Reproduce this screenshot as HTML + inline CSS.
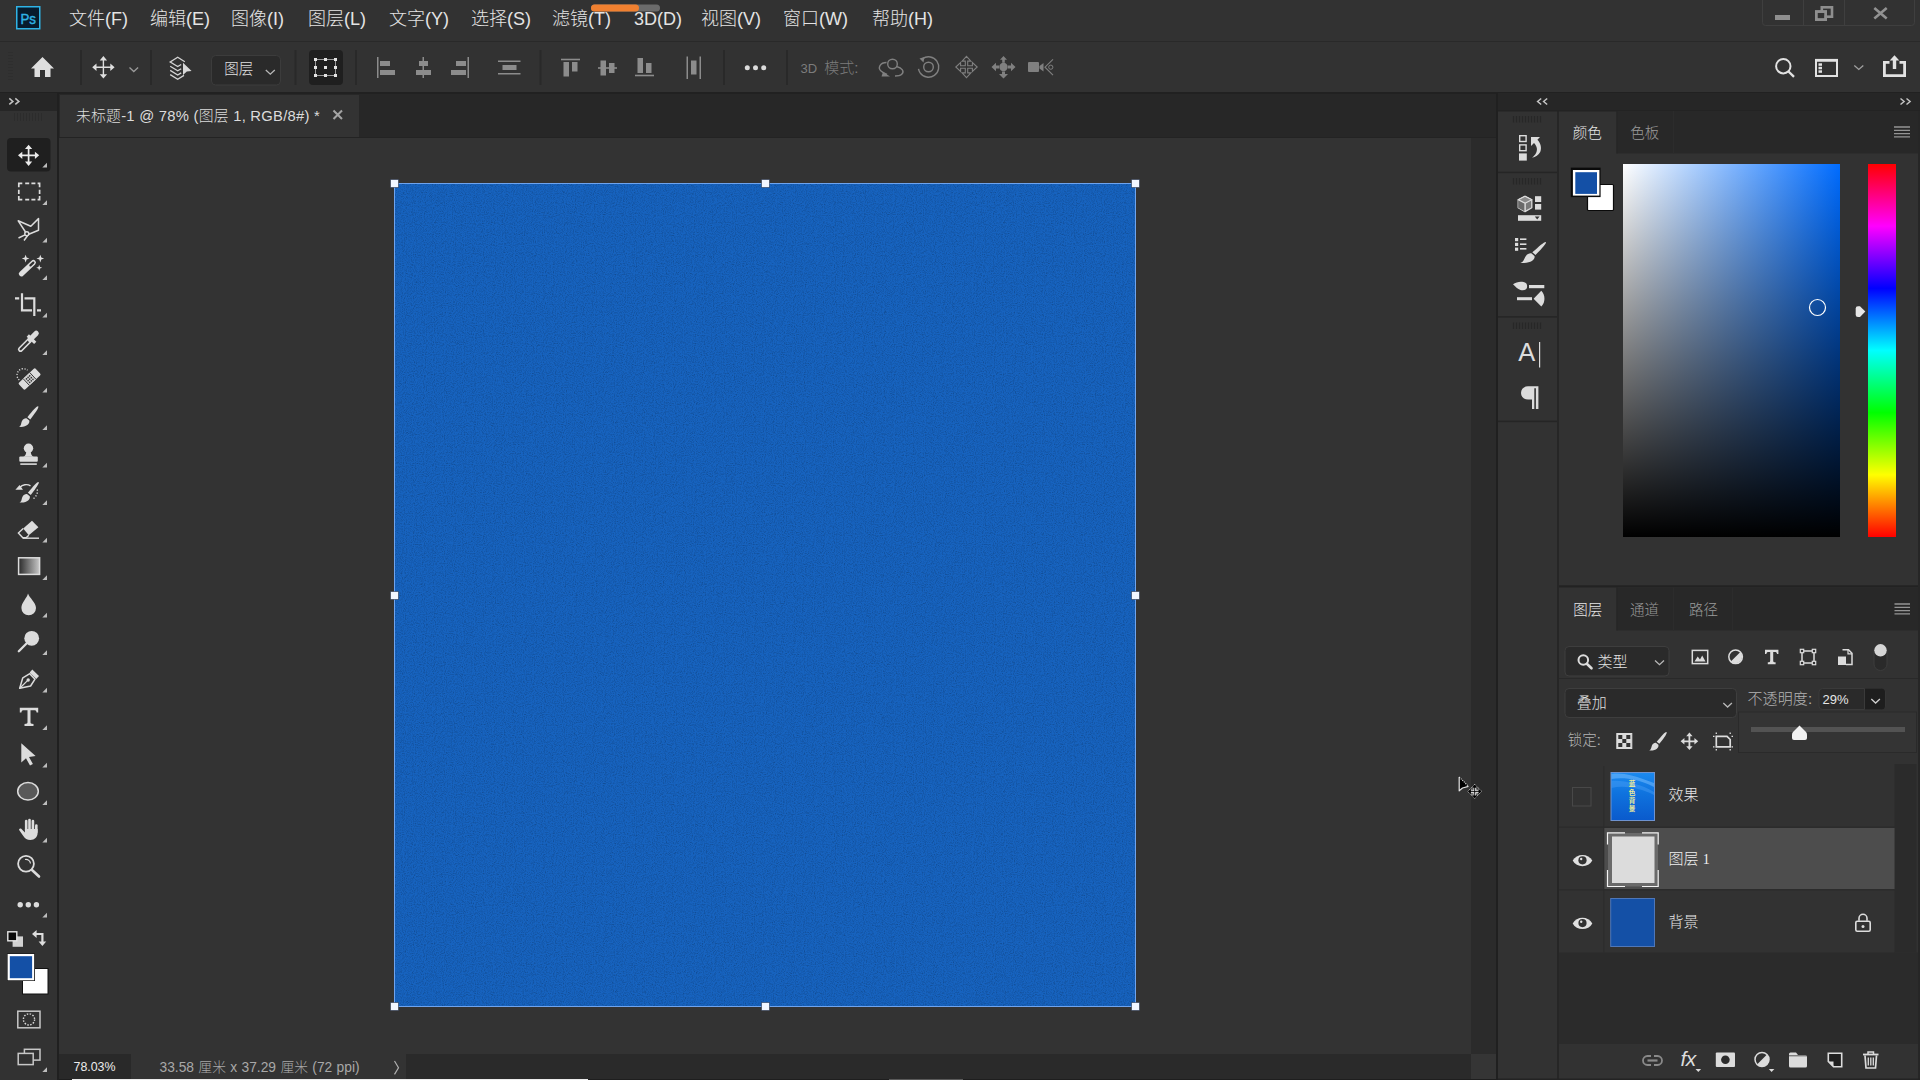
<!DOCTYPE html>
<html lang="zh-CN"><head><meta charset="utf-8"><title>Photoshop</title>
<style>
*{box-sizing:border-box;margin:0;padding:0}
html,body{width:1920px;height:1080px;overflow:hidden;background:#323232}
body{font-family:"Liberation Sans","Noto Sans CJK SC",sans-serif;color:#d6d6d6;position:relative;font-size:13px;font-weight:300}
.abs,.abs *{position:absolute}
div,span,svg{position:absolute}
svg{overflow:visible}
.t{white-space:nowrap;line-height:1}
/* menu */
#menubar{left:0;top:0;width:1920px;height:41px;background:#323232}
#menuline{left:0;top:41px;width:1920px;height:1px;background:#292929}
.mi{top:9px;font-size:18px;color:#e4e4e4;white-space:nowrap;line-height:20px;letter-spacing:0}
/* options */
#optbar{left:0;top:42px;width:1920px;height:50px;background:#323232}
#optline{left:0;top:92px;width:1920px;height:2.5px;background:#212121}
.vsep{width:2px;background:#2a2a2a;top:51px;height:34px}
/* left tools */
#tools{left:0;top:94px;width:57px;height:986px;background:#323232}
#toolsline{left:57px;top:93px;width:3px;height:987px;background:#202020}
#toolshead{left:0;top:93px;width:57px;height:17.5px;background:#262626}
/* doc */
#tabstrip{left:59px;top:94px;width:1438px;height:44px;background:#272727}
#tab{left:60px;top:94.5px;width:299px;height:42.5px;background:#333333}
#paste{left:59px;top:138px;width:1412px;height:916px;background:#333333}
#vscroll{left:1471px;top:138px;width:25px;height:916px;background:#2b2b2b}
#status{left:59px;top:1054px;width:1438px;height:26px;background:#2a2a2a}
#docline{left:1495.5px;top:93px;width:2.5px;height:987px;background:#202020}
/* right strip */
#rhead{left:1498px;top:93px;width:422px;height:17.5px;background:#262626}
#istrip{left:1498px;top:111px;width:59px;height:969px;background:#323232}
#isline{left:1557px;top:111px;width:2px;height:969px;background:#262626}
#rpanel{left:1559px;top:111px;width:361px;height:969px;background:#323232}
</style></head><body>
<div id="menubar"></div><div id="menuline"></div>
<span class="mi" style="left:69px">文件(F)</span>
<span class="mi" style="left:150px">编辑(E)</span>
<span class="mi" style="left:231px">图像(I)</span>
<span class="mi" style="left:308px">图层(L)</span>
<span class="mi" style="left:389px">文字(Y)</span>
<span class="mi" style="left:471px">选择(S)</span>
<span class="mi" style="left:552px">滤镜(T)</span>
<span class="mi" style="left:634px">3D(D)</span>
<span class="mi" style="left:701px">视图(V)</span>
<span class="mi" style="left:783px">窗口(W)</span>
<span class="mi" style="left:872px">帮助(H)</span>
<div id="optbar"></div><div id="optline"></div>
<div id="tools"></div><div id="toolshead"></div><div id="toolsline"></div>
<div id="tabstrip"></div><div id="tab"></div>
<div id="paste"></div><div id="vscroll"></div><div id="status"></div><div id="docline"></div>
<div id="rhead"></div><div id="istrip"></div><div id="isline"></div><div id="rpanel"></div>

<svg id="cv" style="left:0;top:0" width="1920" height="1080" viewBox="0 0 1920 1080">
<defs><filter id="nz" x="0" y="0" width="100%" height="100%"><feTurbulence type="fractalNoise" baseFrequency="0.9" numOctaves="2" seed="3" result="n"/><feColorMatrix type="matrix" values="0 0 0 0 0  0 0 0 0 0  0 0 0 0 0  1.2 1.2 1.2 0 -1.6"/></filter></defs>
<rect x="394" y="183" width="742" height="824" fill="#1763bf"/>
<rect x="394" y="183" width="742" height="824" fill="#000" filter="url(#nz)" opacity="0.2"/>
<rect x="394.5" y="183.5" width="741" height="823" fill="none" stroke="#6fa4ee" stroke-width="1"/>
<g fill="#f2f6ff" stroke="#1d2a44" stroke-opacity="0.55" stroke-width="1">
<rect x="390.5" y="179.5" width="8" height="8"/><rect x="761.5" y="179.5" width="8" height="8"/><rect x="1131.5" y="179.5" width="8" height="8"/>
<rect x="390.5" y="591.5" width="8" height="8"/><rect x="1131.5" y="591.5" width="8" height="8"/>
<rect x="390.5" y="1002.5" width="8" height="8"/><rect x="761.5" y="1002.5" width="8" height="8"/><rect x="1131.5" y="1002.5" width="8" height="8"/>
</g>
<g id="cursor">
<path d="M1459.200 777 L1459.200 790.800 L1462.500 788 L1468.500 786.400 Z" fill="#000"/>
<path d="M1468.500 786.400 L1462.500 788 L1459.200 790.800 L1459.200 777" fill="none" stroke="#e4e4e4" stroke-width="1.200" stroke-linejoin="round"/>
<path d="M1459.200 777 L1468.500 786.400" fill="none" stroke="#e4e4e4" stroke-width="1.100" stroke-dasharray="1.100 1.100"/>
<path transform="translate(1474.700 791.600)" d="M0 -7.300 l3.400 3.600 h-1.800 v1.900 h1.900 v-1.800 l3.600 3.400 l-3.600 3.400 v-1.800 h-1.900 v1.900 h1.800 l-3.400 3.600 l-3.400 -3.600 h1.800 v-1.900 h-1.900 v1.800 l-3.600 -3.400 l3.600 -3.400 v1.800 h1.900 v-1.900 h-1.800 z" fill="#000" stroke="#c8c8c8" stroke-width="0.900" stroke-dasharray="1.200 0.800"/>
<path d="M1474.700 787.800 v7.600 M1470.900 791.600 h7.600" stroke="#e8e8e8" stroke-width="2.600" fill="none"/>
<path d="M1474.700 785.500 v12.200 M1468.600 791.600 h12.200" stroke="#000" stroke-width="0.900" fill="none"/>
</g>
</svg>

<div style="left:59px;top:1054px;width:72px;height:26px;background:#292929"></div>
<div style="left:131px;top:1054px;width:275px;height:26px;background:#333333"></div>
<div style="left:1471px;top:1054px;width:25px;height:24.5px;background:#353535"></div>
<span class="t" style="left:73.500px;top:1060.500px;font-size:12.400px;color:#ececec">78.03%</span>
<span class="t" style="left:159.500px;top:1061px;font-size:13.800px;color:#a8a8a8;word-spacing:0.5px">33.58 厘米 x 37.29 厘米 (72 ppi)</span>
<svg style="left:390px;top:1058px" width="14" height="20" viewBox="390 1058 14 20"><path d="M394.500 1061 l4 6.700 l-4 6.700" fill="none" stroke="#b0b0b0" stroke-width="1.200"/></svg>
<span class="t" style="left:76px;top:108.500px;font-size:14.800px;color:#dcdcdc;letter-spacing:0.25px">未标题-1 @ 78% (图层 1, RGB/8#) *</span>
<svg style="left:330px;top:108px" width="14" height="14" viewBox="330 108 14 14"><path d="M333.500 110.500 l8.500 8.500 M342 110.500 l-8.500 8.500" stroke="#a4a4a4" stroke-width="2.100" fill="none"/></svg>
<div style="left:59px;top:1078.500px;width:1439px;height:1.500px;background:#1e1e1e"></div><div style="left:72px;top:1079px;width:516px;height:1px;background:#ececec"></div><div style="left:889px;top:1079px;width:74px;height:1px;background:#5a5a5a"></div>
<div style="left:59px;top:136.500px;width:1437px;height:1.500px;background:#232323"></div>
<!--CANVAS-->

<svg id="opt" style="left:0;top:0" width="1920" height="94" viewBox="0 0 1920 94">
<!-- ps logo -->
<rect x="16.75" y="6.75" width="23" height="22" fill="#071b2d" stroke="#2fb3e6" stroke-width="1.5"/>
<text x="20.5" y="23.500" font-family="Liberation Sans,sans-serif" font-weight="normal" stroke="#2fb3e6" stroke-width="0.45" font-size="14.500" fill="#2fb3e6" textLength="15.500" lengthAdjust="spacingAndGlyphs">Ps</text>
<!-- progress pill -->
<rect x="591" y="4.500" width="69" height="7" rx="3.500" fill="#6b6b6b"/>
<rect x="591" y="4.500" width="48" height="7" rx="3.500" fill="#f08030"/>
<!-- window buttons -->
<g fill="none" stroke="#3f3f3f" stroke-width="1"><path d="M1762.500 0 V22.500 Q1762.500 25.500 1765.500 25.500 H1911.500 Q1914.500 25.500 1914.500 22.500 V0"/><path d="M1803.500 0V25M1844.500 0V25"/></g>
<rect x="1775" y="15" width="15" height="5" fill="#8e8e8e"/>
<g fill="none" stroke="#8e8e8e" stroke-width="2.600"><rect x="1821.800" y="7.300" width="10.200" height="9.400"/><rect x="1816.300" y="11.600" width="9.400" height="8"/></g>
<rect x="1817.600" y="12.900" width="6.800" height="5.400" fill="#323232"/>
<rect x="1816.300" y="11.600" width="9.400" height="8" fill="none" stroke="#8e8e8e" stroke-width="2.600"/>
<path d="M1874.300 8 L1886.700 18.500 M1886.700 8 L1874.300 18.500" stroke="#929292" stroke-width="2.600" fill="none"/>
<!-- separators -->
<g fill="#292929"><rect x="80" y="50" width="2" height="35"/><rect x="150" y="50" width="2" height="35"/><rect x="294.500" y="50" width="2" height="35"/><rect x="355" y="50" width="2" height="35"/><rect x="539.500" y="50" width="2" height="35"/><rect x="723" y="50" width="2" height="35"/><rect x="786" y="50" width="2" height="35"/></g>
<!-- grip left -->
<g stroke="#2e2e2e" stroke-width="1"><path d="M8 52.500h5M8 55.500h5M8 58.500h5M8 61.500h5M8 64.500h5M8 67.500h5M8 70.500h5M8 73.500h5M8 76.500h5M8 79.500h5"/></g>
<!-- home -->
<path d="M42.500 57 L54 68.500 H50.500 V77 H45 V70 H40 V77 H34.500 V68.500 H31 Z" fill="#dedede"/>
<!-- move -->
<path transform="translate(103.400 67.300)" d="M0 -11.200 l3.700 4.300 h-3 v6.200 h6.200 v-3 l4.300 3.700 l-4.300 3.700 v-3 h-6.200 v6.200 h3 l-3.700 4.300 l-3.700 -4.300 h3 v-6.200 h-6.200 v3 l-4.300 -3.700 l4.300 -3.700 v3 h6.200 v-6.200 h-3 z" fill="#dedede"/>
<path d="M129.500 67.500 l4.300 4 l4.300 -4" fill="none" stroke="#9a9a9a" stroke-width="1.300"/>
<!-- auto select -->
<g fill="none" stroke="#d4d4d4" stroke-width="1.300" stroke-linejoin="miter"><path d="M181.200 64.500 L177.700 66.600 L170.200 62 L177.700 57.300 L184.800 61.700"/><path d="M170.200 66.200 L177.700 70.800 L181.200 68.700"/><path d="M170.200 70.400 L177.700 75 L181.200 72.900"/><path d="M170.200 74.600 L177.700 79.200 L184 75.400"/></g>
<path d="M183 62.800 L191.600 71 L186.800 71.400 L183 75 Z" fill="#d8d8d8"/>
<!-- dropdown -->
<rect x="211.500" y="55.500" width="69" height="29.500" rx="4" fill="#2a2a2a" stroke="#3c3c3c" stroke-width="1"/>
<path d="M265.800 70 l4.500 4.200 l4.500 -4.200" fill="none" stroke="#b8b8b8" stroke-width="1.300"/>
<!-- transform controls -->
<rect x="309" y="50" width="34" height="35" rx="4" fill="#1f1f1f"/>
<g fill="none" stroke="#9a9a9a" stroke-width="1"><rect x="315.500" y="59.500" width="20" height="16"/></g>
<g fill="#e4e4e4"><rect x="314" y="58" width="3" height="3"/><rect x="324" y="58" width="3" height="3"/><rect x="334" y="58" width="3" height="3"/><rect x="314" y="66" width="3" height="3"/><rect x="324" y="66" width="3" height="3"/><rect x="334" y="66" width="3" height="3"/><rect x="314" y="74" width="3" height="3"/><rect x="324" y="74" width="3" height="3"/><rect x="334" y="74" width="3" height="3"/></g>
<!-- align icons (disabled) -->
<g fill="#8c8c8c">
<rect x="377" y="57" width="1.500" height="21"/><rect x="380" y="61" width="10" height="5"/><rect x="380" y="70" width="15" height="5"/>
<rect x="422.500" y="57" width="1.500" height="21"/><rect x="419" y="61" width="9" height="5"/><rect x="416" y="70" width="15" height="5"/>
<rect x="467.500" y="57" width="1.500" height="21"/><rect x="456" y="61" width="10" height="5"/><rect x="451" y="70" width="15" height="5"/>
<rect x="498" y="60.500" width="22.500" height="1.500"/><rect x="502.500" y="65" width="14" height="5"/><rect x="498" y="73" width="22.500" height="1.500"/>
<rect x="561" y="58.700" width="19" height="1.600"/><rect x="563.500" y="62" width="5.500" height="14.500"/><rect x="572" y="62" width="5.500" height="9.500"/>
<rect x="598" y="67.200" width="19" height="1.600"/><rect x="600.500" y="60.500" width="5.500" height="15"/><rect x="609" y="63" width="5.500" height="10"/>
<rect x="635" y="74.700" width="19" height="1.600"/><rect x="637.500" y="58" width="5.500" height="15"/><rect x="646" y="63" width="5.500" height="10"/>
<rect x="686.500" y="56.500" width="1.500" height="22.500"/><rect x="691" y="60.500" width="5.500" height="14"/><rect x="699.500" y="56.500" width="1.500" height="22.500"/>
</g>
<!-- dots -->
<g fill="#dcdcdc"><circle cx="747.300" cy="67.800" r="2.500"/><circle cx="755.500" cy="67.800" r="2.500"/><circle cx="763.700" cy="67.800" r="2.500"/></g>
<!-- 3d icons -->
<g fill="none" stroke="#808080" stroke-width="1.400">
<circle cx="892.500" cy="64" r="4.800"/><path d="M886.500 62.500 C880 62.500 877.500 68 881 71 C883 72.800 885 73.500 887 74.500"/><path d="M896.500 66.500 C902 68 905 71.500 901.500 74.500 C900 75.800 897 76 895 76"/>
<circle cx="928.500" cy="67" r="10.200" stroke-dasharray="52 12.100" transform="rotate(-125 928.500 67)"/><circle cx="928.500" cy="67" r="4.800"/>
<path d="M966.500 56.300 l4.400 4.800 h-3.200 v4.700 h4.700 v-3.200 l4.800 4.400 l-4.800 4.400 v-3.200 h-4.700 v4.700 h3.200 l-4.400 4.800 l-4.400 -4.800 h3.200 v-4.700 h-4.700 v3.200 l-4.800 -4.400 l4.800 -4.400 v3.200 h4.700 v-4.700 h-3.200 z" stroke-width="1.100"/>
<path d="M1053 59.300 l-8 7.900 l8 7.900" stroke-width="1.100"/><circle cx="1050.800" cy="67.200" r="2.100" stroke-width="1"/>
</g>
<g fill="#808080"><path d="M883 72 l7 4.500 h-8.500 z"/><path d="M919.500 58.500 l5 -1.500 l-1 5.500 z"/>
<circle cx="1003.500" cy="67" r="4.200"/><path d="M1003.500 56 l3.500 3.800 h-2.200 v3 h-2.600 v-3 h-2.200 z"/><path d="M1003.500 78.500 l-4.500 -4.500 h3 v-2.500 h3 v2.500 h3 z"/><path d="M991.500 67 l4.500 -4.200 v2.700 h3 v3 h-3 v2.700 z"/><path d="M1015.500 67 l-4.500 -4.200 v2.700 h-3 v3 h3 v2.700 z"/>
<rect x="1028" y="62" width="11" height="10" rx="1"/><path d="M1039.500 66 l4 -3 v8.500 l-4 -3 z"/></g>
<!-- right icons -->
<g fill="none" stroke="#e2e2e2"><circle cx="1783.300" cy="66.200" r="7.200" stroke-width="2"/><path d="M1788.500 71.500 L1794 76.800" stroke-width="2.400"/>
<rect x="1816" y="60.500" width="21" height="15.500" stroke-width="2"/><path d="M1815 60.200h23" stroke-width="2.600"/>
<path d="M1854.300 65.500 l4.500 4 l4.500 -4" stroke="#a0a0a0" stroke-width="1.300"/>
<path d="M1889.500 62.400 H1884.400 V75.600 H1904.600 V62.400 H1899.500" stroke-width="2.800"/></g>
<g fill="#e2e2e2"><rect x="1818.500" y="63.300" width="3.500" height="2.500"/><rect x="1818.500" y="66.800" width="3.500" height="2.500"/><rect x="1818.500" y="70.300" width="3.500" height="2.500"/>
<path d="M1894.500 55.200 l4.800 5.300 h-3.100 v8.500 h-3.400 v-8.500 h-3.100 z"/></g>
</svg>
<span class="t" style="left:224.300px;top:61.800px;font-size:14.500px;color:#e0e0e0">图层</span>
<span class="t" style="left:800.500px;top:60px;font-size:15px;color:#7c7c7c;word-spacing:3px"><span style="position:static;font-size:13px">3D</span> 模式:</span>
<!--OPTICONS-->

<svg id="tl" style="left:0;top:0" width="60" height="1080" viewBox="0 0 60 1080">
<path d="M9.300 98.400 l3.600 3 l-3.600 3 M15.300 98.400 l3.600 3 l-3.600 3" fill="none" stroke="#c4c4c4" stroke-width="1.500"/>
<g stroke="#2c2c2c" stroke-width="1"><path d="M14.500 113v8M17.500 113v8M20.500 113v8M23.500 113v8M26.500 113v8M29.500 113v8M32.500 113v8M35.500 113v8M38.500 113v8M41.500 113v8"/></g>
<rect x="7" y="138" width="43.500" height="33.500" rx="4" fill="#1f1f1f"/>
<g fill="#bdbdbd"><path d="M47 162.8 V167.5 H42.3 Z"/><path d="M47 200.3 V205.0 H42.3 Z"/><path d="M47 237.8 V242.5 H42.3 Z"/><path d="M47 275.3 V280.0 H42.3 Z"/><path d="M47 312.8 V317.5 H42.3 Z"/><path d="M47 350.3 V355.0 H42.3 Z"/><path d="M47 387.8 V392.5 H42.3 Z"/><path d="M47 425.3 V430.0 H42.3 Z"/><path d="M47 462.8 V467.5 H42.3 Z"/><path d="M47 500.3 V505.0 H42.3 Z"/><path d="M47 537.8 V542.5 H42.3 Z"/><path d="M47 575.3 V580.0 H42.3 Z"/><path d="M47 612.8 V617.5 H42.3 Z"/><path d="M47 650.3 V655.0 H42.3 Z"/><path d="M47 687.8 V692.5 H42.3 Z"/><path d="M47 725.3 V730.0 H42.3 Z"/><path d="M47 762.8 V767.5 H42.3 Z"/><path d="M47 800.3 V805.0 H42.3 Z"/><path d="M47 837.8 V842.5 H42.3 Z"/><path d="M47 912.8 V917.5 H42.3 Z"/><path d="M47 1067.3 V1072.0 H42.3 Z"/></g>
<!-- move -->
<path transform="translate(28.600 155.300)" d="M0 -10.600 l3.600 4.300 h-2.750 v5.450 h5.450 v-2.750 l4.300 3.600 l-4.300 3.600 v-2.750 h-5.450 v5.450 h2.750 l-3.600 4.300 l-3.600 -4.300 h2.750 v-5.450 h-5.450 v2.750 l-4.300 -3.600 l4.300 -3.600 v2.750 h5.450 v-5.450 h-2.750 z" fill="#ececec"/>
<!-- marquee -->
<path d="M18.800 187.300 V183.300 H22.300 M25.200 183.300 h4 M31.400 183.300 h4 M37.600 183.300 H39.600 V187.300 M39.600 189.800 v4.200 M39.600 196 V199.600 H37.600 M35.400 199.600 h-4 M29.200 199.600 h-4 M22.300 199.600 H18.800 V196 M18.800 194 v-4.200" fill="none" stroke="#dcdcdc" stroke-width="1.700"/>
<!-- lasso -->
<g fill="none" stroke="#dcdcdc" stroke-width="1.500" stroke-linejoin="round"><path d="M25.500 232 L18.200 220.800 L30.800 226.300 L38.500 218.600 L38.500 230.300 L28.800 234.300"/><circle cx="26.800" cy="233.800" r="2"/><path d="M25 234.800 L18.500 238 M27.500 235.800 L24 240.500"/></g>
<!-- wand -->
<g><path d="M21.400 273.800 L33.300 262.600" stroke="#e0e0e0" stroke-width="5.200" stroke-linecap="round" fill="none"/><path d="M30.400 265.400 L33.300 262.600" stroke="#323232" stroke-width="2.200" stroke-linecap="round"/>
<g fill="#e0e0e0"><path d="M25.600 254.800 l1 2.800 l2.800 1 l-2.800 1 l-1 2.800 l-1 -2.800 l-2.800 -1 l2.800 -1 z"/><path d="M40.300 254.800 l1 2.800 l2.800 1 l-2.800 1 l-1 2.800 l-1 -2.800 l-2.800 -1 l2.800 -1 z"/><path d="M39.200 264.700 l0.800 2.200 l2.200 0.800 l-2.200 0.800 l-0.800 2.200 l-0.800 -2.200 l-2.200 -0.800 l2.200 -0.800 z"/></g></g>
<!-- crop -->
<path d="M22 293.300 V310.300 H32 M24.500 298.300 H34.300 V316 M15 298.300 h4.200 M37 310.300 h4" fill="none" stroke="#dcdcdc" stroke-width="2.200"/>
<!-- eyedropper -->
<g><path d="M20.500 349.300 L29.500 340.300" stroke="#dcdcdc" stroke-width="5.200" stroke-linecap="round"/><path d="M20.600 349.200 L29 340.800" stroke="#323232" stroke-width="2.200" stroke-linecap="round"/>
<path d="M27.800 335.500 L35.200 342.900" stroke="#dcdcdc" stroke-width="3.200"/><path d="M30 339.500 L36.200 333.300" stroke="#dcdcdc" stroke-width="5.200" stroke-linecap="round"/></g>
<!-- heal -->
<g transform="translate(29.600 379) rotate(-43)"><rect x="-11.500" y="-4.600" width="23" height="9.200" rx="1.500" fill="#dcdcdc"/><rect x="-4.300" y="-4.600" width="8.600" height="9.200" fill="#d0d0d0"/><path d="M-4.500 -4.600v9.200M4.500 -4.600v9.200" stroke="#323232" stroke-width="0.900"/><g fill="#323232"><circle cx="-2.200" cy="-2.200" r="0.800"/><circle cx="0" cy="-2.200" r="0.800"/><circle cx="2.200" cy="-2.200" r="0.800"/><circle cx="-2.200" cy="0.200" r="0.800"/><circle cx="0" cy="0.200" r="0.800"/><circle cx="2.200" cy="0.200" r="0.800"/><circle cx="-2.200" cy="2.500" r="0.800"/><circle cx="0" cy="2.500" r="0.800"/><circle cx="2.200" cy="2.500" r="0.800"/></g></g>
<path d="M19.300 380 A5.500 5.500 0 0 1 27.500 370.200" fill="none" stroke="#dcdcdc" stroke-width="1.300" stroke-dasharray="1.200 1.500"/>
<!-- brush -->
<g fill="#dcdcdc"><path d="M38.200 406.300 C39.200 407.300 36 412 30.300 419.400 L27.400 417.200 C33 410 37.200 405.500 38.200 406.300 Z"/><path d="M26.500 418.300 L29.300 420.600 C30 424 26.500 427.500 19 426.800 C21.500 425.500 21 423 22 421 C23 419 25 418 26.500 418.300 Z"/></g>
<!-- stamp -->
<g fill="#dcdcdc"><circle cx="28.500" cy="448.200" r="4.700"/><path d="M26.300 451 h4.400 c0 3 1 5 3 5.800 h-10.400 c2 -0.800 3 -2.800 3 -5.800 z"/><rect x="19.300" y="456.500" width="18.500" height="5.300" rx="1"/><rect x="20.300" y="463.300" width="16.500" height="1.600"/></g>
<!-- history brush -->
<g fill="#dcdcdc"><path d="M38.600 482 C39.600 483 36.500 487.500 30.800 495 L27.900 492.800 C33.500 485.600 37.600 481.200 38.600 482 Z"/><path d="M27 494 L29.800 496.300 C30.500 499.700 27 503.200 19.500 502.500 C22 501.200 21.500 498.700 22.500 496.700 C23.500 494.700 25.500 493.700 27 494 Z"/><path d="M15.400 489.800 L19.600 485 L23 489.800 Z"/></g>
<path d="M19.800 487.500 C22.500 484.500 27 483.800 30.500 485.800" fill="none" stroke="#dcdcdc" stroke-width="1.400"/>
<path d="M37.200 489.500 C38 493.500 36 497.500 32 499.300" fill="none" stroke="#dcdcdc" stroke-width="1.400" stroke-dasharray="1.300 1.700"/>
<!-- eraser -->
<g><path d="M32 520.800 L38.400 527.200 L28.800 535.200 L23.200 528.600 Z" fill="#dcdcdc"/><path d="M23.200 528.600 L18.400 533 L22.800 537.800 L26.200 537.800 L28.800 535.200" fill="none" stroke="#dcdcdc" stroke-width="1.400"/><path d="M22.800 538.200 H39" stroke="#dcdcdc" stroke-width="1.400"/></g>
<!-- gradient -->
<defs><linearGradient id="gg" x1="0" x2="1" y1="0" y2="0"><stop offset="0" stop-color="#2a2a2a"/><stop offset="1" stop-color="#c8c8c8"/></linearGradient></defs>
<rect x="18.600" y="557.800" width="21" height="16.600" fill="url(#gg)" stroke="#dcdcdc" stroke-width="1.500"/>
<!-- blur -->
<path d="M28 593.500 C29.500 598 36 602.500 36 608 A7.300 7.300 0 0 1 21.400 608 C21.400 602.500 27 598 28 593.500 Z" fill="#dcdcdc"/>
<!-- dodge -->
<circle cx="31.700" cy="638.300" r="7.400" fill="#dcdcdc"/><path d="M26.500 643.500 L18.800 651.300" stroke="#dcdcdc" stroke-width="2.300" stroke-linecap="round"/>
<!-- pen -->
<g><path d="M19.700 688.300 L22.800 677.800 L29.800 673.700 L35 679.200 L30.600 686 Z" fill="none" stroke="#dcdcdc" stroke-width="1.500" stroke-linejoin="round"/><path d="M20 688 L27.500 680.600" stroke="#dcdcdc" stroke-width="1.300"/><circle cx="28.200" cy="680" r="1.700" fill="#dcdcdc"/><path d="M32.300 669.600 L39 676 L36.300 679 L29.600 672.400 Z" fill="#dcdcdc"/></g>
<!-- type -->
<path d="M19.800 707.800 H38.200 V712.600 H36.600 C36.400 710.800 35.800 710.300 34 710.300 H30.500 V722 C30.500 723.500 31 723.900 33.500 724 V726 H24.500 V724 C27 723.900 27.500 723.500 27.500 722 V710.300 H24 C22.200 710.300 21.600 710.800 21.400 712.600 H19.800 Z" fill="#dcdcdc"/>
<!-- path select -->
<path d="M21.300 743.300 L21.300 762.400 L26 758.300 L30 765.600 L32.900 764 L29 757 L35.600 756 Z" fill="#dcdcdc"/>
<!-- ellipse -->
<ellipse cx="28" cy="791.300" rx="10.300" ry="8.700" fill="#595959" stroke="#dcdcdc" stroke-width="1.500"/>
<!-- hand -->
<g stroke="#dcdcdc" stroke-width="2.600" stroke-linecap="round" fill="none"><path d="M26.200 821 V830"/><path d="M29.500 820 V830"/><path d="M32.900 821 V830"/><path d="M36.300 825.500 V832"/></g>
<path d="M24.900 829 H37.600 V833 C37.600 837 34.500 840 30.500 840 C27 840 25 838.500 23.300 836 L19.300 830.300 C18.500 829 20 827.800 21.300 828.800 L24.900 832.500 Z" fill="#dcdcdc"/>
<!-- zoom -->
<circle cx="26" cy="863.800" r="7.900" fill="none" stroke="#dcdcdc" stroke-width="1.800"/><path d="M32 870 L39 876.500" stroke="#dcdcdc" stroke-width="2.600" stroke-linecap="round"/><path d="M25 859.500 C28 859 30.300 861 30.500 863.500" fill="none" stroke="#dcdcdc" stroke-width="1.200"/>
<!-- dots -->
<g fill="#dcdcdc"><circle cx="20.200" cy="904.800" r="2.700"/><circle cx="28.300" cy="904.800" r="2.700"/><circle cx="36.400" cy="904.800" r="2.700"/></g>
<!-- default colors -->
<rect x="12.600" y="936.400" width="10.400" height="10.400" fill="#d2d2d2"/><rect x="7.800" y="931.800" width="9" height="9" fill="#0a0a0a" stroke="#e6e6e6" stroke-width="1.400"/>
<!-- swap -->
<g fill="#dcdcdc"><path d="M32 934 l4.600 -4 v2.900 h6.900 v8.700 h2.700 l-3.800 4.400 l-3.800 -4.400 h2.700 v-6.500 h-4.700 v2.900 z"/></g>
<!-- fg/bg -->
<rect x="22.500" y="968.500" width="25.500" height="25.500" fill="#fff" stroke="#111" stroke-width="1"/>
<rect x="7" y="953.500" width="28" height="27.500" fill="#111"/><rect x="7.600" y="954" width="26.600" height="26.300" fill="#fff"/><rect x="9.800" y="956.200" width="22.300" height="22" fill="#1450a6"/>
<!-- quick mask -->
<rect x="17.800" y="1011.200" width="22.200" height="16.600" fill="none" stroke="#c8c8c8" stroke-width="1.500"/><circle cx="29" cy="1019.400" r="5.600" fill="none" stroke="#d8d8d8" stroke-width="1.400" stroke-dasharray="1.500 1.430"/>
<!-- screen mode -->
<rect x="24.400" y="1049.300" width="15.600" height="10.800" fill="none" stroke="#c8c8c8" stroke-width="1.500"/><rect x="18.200" y="1053.400" width="15" height="11.200" fill="#323232" stroke="#c8c8c8" stroke-width="1.500"/>
</svg>
<!--TOOLICONS-->

<svg id="rs" style="left:0;top:0" width="1920" height="600" viewBox="0 0 1920 600">
<defs>
<linearGradient id="hx" x1="0" x2="1" y1="0" y2="0"><stop offset="0" stop-color="#fff"/><stop offset="1" stop-color="#006cff"/></linearGradient>
<linearGradient id="vy" x1="0" x2="0" y1="0" y2="1"><stop offset="0" stop-color="#000" stop-opacity="0"/><stop offset="1" stop-color="#000"/></linearGradient>
<linearGradient id="hue" x1="0" x2="0" y1="0" y2="1"><stop offset="0" stop-color="#f00"/><stop offset="0.1667" stop-color="#f0f"/><stop offset="0.3333" stop-color="#00f"/><stop offset="0.5" stop-color="#0ff"/><stop offset="0.6667" stop-color="#0f0"/><stop offset="0.8333" stop-color="#ff0"/><stop offset="1" stop-color="#f00"/></linearGradient>
</defs>
<!-- header chevrons -->
<path d="M1541.200 98.500 l-3.600 3 l3.600 3 M1547.200 98.500 l-3.600 3 l3.600 3" fill="none" stroke="#c4c4c4" stroke-width="1.500"/>
<path d="M1900.500 98.500 l3.600 3 l-3.600 3 M1906.500 98.500 l3.600 3 l-3.600 3" fill="none" stroke="#c4c4c4" stroke-width="1.500"/>
<rect x="1498" y="110" width="422" height="1.500" fill="#232323"/>
<!-- icon strip groups -->
<path d="M1513.5 116v6.5M1516.5 116v6.5M1519.5 116v6.5M1522.5 116v6.5M1525.5 116v6.5M1528.5 116v6.5M1531.5 116v6.5M1534.5 116v6.5M1537.5 116v6.5M1540.5 116v6.5" stroke="#272727" stroke-width="1.2"/><path d="M1513.5 178v6.5M1516.5 178v6.5M1519.5 178v6.5M1522.5 178v6.5M1525.5 178v6.5M1528.5 178v6.5M1531.5 178v6.5M1534.5 178v6.5M1537.5 178v6.5M1540.5 178v6.5" stroke="#272727" stroke-width="1.2"/><path d="M1513.5 322.5v6.5M1516.5 322.5v6.5M1519.5 322.5v6.5M1522.5 322.5v6.5M1525.5 322.5v6.5M1528.5 322.5v6.5M1531.5 322.5v6.5M1534.5 322.5v6.5M1537.5 322.5v6.5M1540.5 322.5v6.5" stroke="#272727" stroke-width="1.2"/>
<rect x="1498" y="171.700" width="59" height="1.500" fill="#252525"/><rect x="1498" y="316.200" width="59" height="1.500" fill="#252525"/><rect x="1498" y="420.600" width="59" height="1.500" fill="#252525"/>
<!-- history -->
<g fill="none" stroke="#dcdcdc" stroke-width="1.400"><rect x="1519.700" y="135.700" width="6.400" height="5.800"/><rect x="1519.700" y="144.900" width="6.400" height="5.800"/></g>
<rect x="1519" y="153.400" width="7.800" height="7.200" fill="#dcdcdc"/>
<path d="M1531 137 H1540 L1537.400 139.800 C1540.600 143 1542 148 1540.200 152 C1538.700 155 1535.500 157 1532 157.800 C1535.500 155 1537.500 151.500 1536.800 148 C1536.300 146 1535.300 144.300 1534 143 L1531 146 Z" fill="#dcdcdc"/>
<!-- 3d -->
<g><path d="M1525 196.300 L1531.800 199.800 V207.700 L1525 211.600 L1518.200 207.700 V199.800 Z" fill="#7a7a7a" stroke="#dcdcdc" stroke-width="1.300" stroke-linejoin="round"/><path d="M1525 196.300 L1531.800 199.800 L1525 203.300 L1518.200 199.800 Z" fill="#8a8a8a" stroke="#dcdcdc" stroke-width="1.200" stroke-linejoin="round"/><path d="M1525 203.300 V211.600" stroke="#dcdcdc" stroke-width="1.200"/><path d="M1518.200 199.800 L1525 203.300 V211.600 L1518.200 207.700Z" fill="#6a6a6a"/><path d="M1518.200 199.800 L1525 203.300 V211.600" fill="none" stroke="#dcdcdc" stroke-width="1.200"/>
<g fill="#dcdcdc"><rect x="1535" y="196.200" width="6.200" height="5.800"/><rect x="1535" y="204" width="6.200" height="5.600"/><rect x="1518" y="215.200" width="23.200" height="5.600"/></g><path d="M1534.800 216.600 h4.800 l-2.400 3 z" fill="#323232"/></g>
<!-- brush settings -->
<g fill="#dcdcdc"><rect x="1515" y="238" width="3.200" height="3.200"/><rect x="1515" y="242.800" width="3.200" height="3.200"/><rect x="1515" y="247.600" width="3.200" height="3.200"/><rect x="1520" y="238.400" width="6.400" height="1.600"/><rect x="1520" y="243.400" width="6.400" height="1.600"/><rect x="1520" y="248" width="6.400" height="1.600"/>
<path d="M1545.800 242 C1546.800 243 1543 247.500 1535.500 255 L1532.300 252.300 C1540 245.500 1544.800 241.200 1545.800 242 Z"/><path d="M1531.300 253.300 L1534.500 256 C1535.500 259.500 1530.500 263.500 1520.400 263 C1523.500 261.800 1524 259.500 1525.200 257 C1526.500 254.500 1529 253 1531.300 253.300 Z"/></g>
<!-- brushes -->
<g fill="#dcdcdc"><path d="M1513 284.300 C1516 282 1520 281.300 1523.500 282 C1526.500 282.600 1527.500 285 1527 287.500 C1526.500 290 1523.500 290.800 1520.500 290 C1517.500 289.200 1515.500 286.800 1513 284.300 Z"/><rect x="1529" y="285" width="15.300" height="3.200"/><rect x="1517" y="297.200" width="15" height="3"/><path d="M1533.600 298.700 L1541.300 290.800 C1545.500 295 1545.500 302.500 1541.300 306.600 Z"/></g>
<!-- A| -->
<path d="M1539.600 342v25.500" stroke="#dcdcdc" stroke-width="1.200"/>
<!-- pilcrow -->
<path d="M1538.400 386.200 V409 H1535.900 V388.300 H1534.300 V409 H1532 V399.600 H1528 C1524 399.600 1521 396.800 1521 393 C1521 389 1524 386.200 1528 386.200 Z" fill="#dcdcdc"/>
<!-- color tabs -->
<rect x="1616.500" y="111" width="303.500" height="42.500" fill="#282828"/>
<rect x="1616.500" y="111" width="1" height="42.500" fill="#252525"/><rect x="1673" y="111" width="1" height="42.500" fill="#2c2c2c"/>
<path d="M1894 127h16M1894 130.300h16M1894 133.600h16M1894 136.900h16" stroke="#949494" stroke-width="1.300"/>
<!-- swatches -->
<rect x="1587.500" y="184.500" width="26" height="26" rx="1" fill="#fff" stroke="#0a0a0a" stroke-width="1.200"/>
<rect x="1570.800" y="167.600" width="29.800" height="29.500" fill="#0a0a0a"/><rect x="1572.900" y="170" width="26.500" height="25.600" fill="#fff"/><rect x="1575.300" y="172.200" width="21.700" height="21.700" fill="#1450a6"/>
<!-- color field -->
<rect x="1623" y="164" width="217" height="373" fill="url(#hx)"/><rect x="1623" y="164" width="217" height="373" fill="url(#vy)"/>
<circle cx="1817.500" cy="307.500" r="8" fill="none" stroke="#fff" stroke-width="1.200"/>
<rect x="1868" y="164" width="28" height="373" fill="url(#hue)"/>
<path d="M1855.700 308.500 Q1855.700 306.300 1858 306.300 H1860 L1865.300 311.600 L1860 317 H1858 Q1855.700 317 1855.700 314.800 Z" fill="#e6e6e6"/>
<!-- panel separator -->
<rect x="1559" y="585.300" width="361" height="2.200" fill="#222222"/>
<rect x="1918" y="111" width="2" height="489" fill="#262626"/>
</svg>
<span class="t" style="left:1518.300px;top:340px;font-size:25.500px;color:#dcdcdc;font-family:'Liberation Sans',sans-serif">A</span>
<span class="t" style="left:1572.800px;top:126px;font-size:14.500px;color:#e6e6e6">颜色</span>
<span class="t" style="left:1630.300px;top:126px;font-size:14.500px;color:#9a9a9a">色板</span>
<!--RIGHT-->

<svg id="ly" style="left:0;top:580px" width="1920" height="500" viewBox="0 580 1920 500">
<defs><linearGradient id="th1" x1="0" x2="0" y1="0" y2="1"><stop offset="0" stop-color="#1b8af0"/><stop offset="0.45" stop-color="#0f72de"/><stop offset="1" stop-color="#0a5acc"/></linearGradient></defs>
<!-- tabs -->
<rect x="1616.500" y="587.500" width="301.500" height="43" fill="#282828"/>
<rect x="1616.500" y="587.500" width="1" height="43" fill="#252525"/><rect x="1673" y="587.500" width="1" height="43" fill="#2c2c2c"/><rect x="1732" y="587.500" width="1" height="43" fill="#2c2c2c"/>
<path d="M1894.500 604h15.500M1894.500 607.300h15.500M1894.500 610.600h15.500M1894.500 613.900h15.500" stroke="#949494" stroke-width="1.300"/>
<!-- filter row -->
<rect x="1565" y="646.500" width="104" height="29.500" rx="4" fill="#2a2a2a" stroke="#3e3e3e"/>
<circle cx="1583.300" cy="660" r="4.800" fill="none" stroke="#dcdcdc" stroke-width="2"/><path d="M1586.800 663.800 L1591.500 668.300" stroke="#dcdcdc" stroke-width="2.600" stroke-linecap="round"/>
<path d="M1655 660.500 l4.500 4.200 l4.500 -4.200" fill="none" stroke="#b8b8b8" stroke-width="1.300"/>
<rect x="1692.300" y="650.400" width="15.400" height="13.200" fill="none" stroke="#dcdcdc" stroke-width="1.500"/><path d="M1694.500 661.500 l3.200 -5 l2.300 3 l2.200 -4 l3.300 6 z" fill="#dcdcdc"/>
<circle cx="1735.600" cy="656.800" r="6.800" fill="none" stroke="#dcdcdc" stroke-width="1.500"/><path d="M1730.800 661.600 A6.800 6.800 0 0 0 1740.400 652 Z" fill="#dcdcdc"/>
<path d="M1765 649.800 H1778.400 V654 H1777 C1776.800 652.300 1776.300 651.900 1774.800 651.900 H1773.200 V660.500 C1773.200 661.900 1773.600 662.200 1775.600 662.300 V664.200 H1767.800 V662.300 C1769.800 662.200 1770.200 661.900 1770.200 660.500 V651.900 H1768.600 C1767.100 651.900 1766.600 652.300 1766.400 654 H1765 Z" fill="#dcdcdc"/>
<rect x="1802" y="651" width="12" height="12" fill="none" stroke="#dcdcdc" stroke-width="1.500"/><g fill="#323232" stroke="#dcdcdc" stroke-width="1.200"><rect x="1800.300" y="649.300" width="3.400" height="3.400"/><rect x="1812.300" y="649.300" width="3.400" height="3.400"/><rect x="1800.300" y="661.300" width="3.400" height="3.400"/><rect x="1812.300" y="661.300" width="3.400" height="3.400"/></g>
<path d="M1842.500 649.800 H1848.500 L1852 653.300 V664.500 H1846" fill="none" stroke="#dcdcdc" stroke-width="1.500"/><path d="M1848 649.800 V653.800 H1852" fill="none" stroke="#dcdcdc" stroke-width="1.200"/><rect x="1838" y="656.500" width="8" height="8.500" fill="#dcdcdc"/>
<rect x="1874" y="644.500" width="13" height="26" rx="6.500" fill="#2a2a2a" stroke="#3c3c3c"/><circle cx="1880.500" cy="650.300" r="6.200" fill="#d6d6d6"/>
<rect x="1559" y="678" width="359" height="1" fill="#292929"/>
<!-- blend row -->
<rect x="1565" y="688.500" width="171.500" height="29" rx="4" fill="#2a2a2a" stroke="#3e3e3e"/>
<path d="M1723.300 703 l4.300 4 l4.300 -4" fill="none" stroke="#b8b8b8" stroke-width="1.300"/>
<rect x="1819" y="688.500" width="66" height="21" rx="3.500" fill="#2a2a2a" stroke="#3a3a3a"/><path d="M1864.500 688.500 H1881.500 Q1885 688.500 1885 692 V706 Q1885 709.500 1881.500 709.500 H1864.500 Z" fill="#1e1e1e"/><rect x="1864" y="688.500" width="1" height="21" fill="#3a3a3a"/>
<path d="M1871.300 699 l4.300 4 l4.300 -4" fill="none" stroke="#d0d0d0" stroke-width="1.300"/>
<!-- slider popup -->
<rect x="1738.500" y="712" width="178" height="40.500" fill="#343434" stroke="#2a2a2a"/>
<rect x="1751" y="727" width="154" height="5" fill="#535353"/>
<path d="M1799.500 725.500 L1806 732 Q1807 733 1807 734.500 V738 Q1807 740 1805 740 H1794 Q1792 740 1792 738 V734.500 Q1792 733 1793 732 Z" fill="#f2f2f2"/>
<!-- lock row icons -->
<rect x="1616.800" y="733.500" width="15" height="15" fill="#dcdcdc" stroke="#dcdcdc" stroke-width="1"/><g fill="#323232"><rect x="1618.300" y="735" width="4" height="4"/><rect x="1626.300" y="735" width="4" height="4"/><rect x="1622.300" y="739" width="4" height="4"/><rect x="1618.300" y="743" width="4" height="4"/><rect x="1626.300" y="743" width="4" height="4"/></g>
<g fill="#dcdcdc"><path d="M1666.500 732 C1667.500 733 1664.500 737.500 1659.300 743.800 L1656.700 741.800 C1661.700 735.500 1665.600 731.200 1666.500 732 Z"/><path d="M1655.900 742.800 L1658.400 744.800 C1659 748 1656 751 1649.300 750.500 C1651.500 749.300 1651.200 747.200 1652 745.300 C1652.800 743.500 1654.500 742.600 1655.900 742.800 Z"/></g>
<path transform="translate(1689.400 741.300)" d="M0 -8.800 l3.200 3.800 h-2.300 v4.100 h4.100 v-2.300 l3.800 3.200 l-3.800 3.200 v-2.300 h-4.100 v4.100 h2.300 l-3.200 3.800 l-3.200 -3.800 h2.300 v-4.100 h-4.100 v2.300 l-3.800 -3.200 l3.800 -3.200 v2.300 h4.100 v-4.100 h-2.300 z" fill="#dcdcdc"/>
<g fill="none" stroke="#dcdcdc"><path d="M1716.300 736.300 H1727 L1730.200 739.500 V746.800 H1716.300 Z" stroke-width="1.700"/><path d="M1713 736.300h1.500M1716.300 732.500v1.500M1731.500 736.300h1.500M1730.200 732.500v1.500M1713 746.800h1.500M1716.300 749v1.500M1731.500 746.800h1.500M1730.200 749v1.500" stroke-width="1.300"/></g>
<!-- list -->
<rect x="1559" y="952.500" width="359" height="91.500" fill="#2b2b2b"/>
<rect x="1894.500" y="764" width="22" height="188.500" fill="#2b2b2b"/>
<rect x="1604" y="828" width="290.500" height="61" fill="#4d4d4d"/>
<rect x="1559" y="826.500" width="335.500" height="1.200" fill="#2a2a2a"/><rect x="1559" y="889.300" width="335.500" height="1.200" fill="#2a2a2a"/>
<rect x="1603.300" y="766" width="1" height="186.500" fill="#2c2c2c"/>
<rect x="1572.500" y="787.500" width="18.500" height="18.500" fill="none" stroke="#484848"/>
<path d="M1572.7 860.6 C1576.5 853.1 1588.5 853.1 1592.3 860.6 C1588.5 868.1 1576.5 868.1 1572.7 860.6 Z" fill="#e0e0e0"/><circle cx="1582.5" cy="860.3000000000001" r="4.1" fill="#323232"/><circle cx="1582.5" cy="860.3000000000001" r="2.3" fill="#e0e0e0" opacity="0"/><circle cx="1581.2" cy="859.0" r="1.2" fill="#e0e0e0"/><path d="M1572.7 923.4 C1576.5 915.9 1588.5 915.9 1592.3 923.4 C1588.5 930.9 1576.5 930.9 1572.7 923.4 Z" fill="#e0e0e0"/><circle cx="1582.5" cy="923.1" r="4.1" fill="#323232"/><circle cx="1582.5" cy="923.1" r="2.3" fill="#e0e0e0" opacity="0"/><circle cx="1581.2" cy="921.8" r="1.2" fill="#e0e0e0"/>
<!-- thumb1 -->
<rect x="1611" y="772.500" width="43.500" height="48" fill="url(#th1)" stroke="#6f93cf" stroke-width="1"/>
<path d="M1611.500 774 C1622 772.500 1633 775 1654 783 V787 C1638 779 1624 777 1611.500 779 Z" fill="#7cc0ff" opacity="0.500"/>
<path d="M1611.500 781 C1624 780 1640 784 1654 792 V795 C1640 788 1624 785 1611.500 788 Z" fill="#5aa8f8" opacity="0.350"/>
<text font-size="6.600" fill="#ecec9a" font-family="Noto Sans CJK SC,sans-serif" font-weight="bold" text-anchor="middle"><tspan x="1632" y="786.200">蓝</tspan><tspan x="1632" y="794.800">色</tspan><tspan x="1632" y="803">背</tspan><tspan x="1632" y="811.200">景</tspan></text>
<!-- thumb2 -->
<rect x="1608" y="833" width="50" height="53.500" fill="#6a6a6a"/>
<rect x="1612" y="836.500" width="42.500" height="46.500" fill="#dcdcdc"/>
<path d="M1607.500 844.500 V832.800 H1625 M1642 832.800 H1658.200 V844.500 M1658.200 870 V886.500 H1642 M1625 886.500 H1607.500 V870" fill="none" stroke="#f4f4f4" stroke-width="1.200"/>
<!-- thumb3 -->
<rect x="1610.700" y="898.500" width="43.800" height="48" fill="#1450a6" stroke="#4f77b8" stroke-width="1"/>
<!-- lock -->
<g transform="translate(0 0.800)"><rect x="1855.800" y="920.500" width="14.400" height="10" rx="1.500" fill="none" stroke="#dcdcdc" stroke-width="1.600"/><path d="M1859 920 V917.500 A4 4 0 0 1 1867 917.500 V920" fill="none" stroke="#dcdcdc" stroke-width="1.600"/><circle cx="1863" cy="925.600" r="1.500" fill="#dcdcdc"/></g>
<!-- bottom bar icons -->
<g fill="none" stroke="#8a8a8a" stroke-width="1.800"><path d="M1651 1056 H1647.500 A4.500 4.500 0 0 0 1647.500 1065 H1651"/><path d="M1654 1056 H1657.500 A4.500 4.500 0 0 1 1657.500 1065 H1654"/><path d="M1647.500 1060.500 H1657.500" stroke-width="2.200"/></g>
<path d="M1695.500 1069 h5.600 l-2.800 3 z" fill="#dcdcdc"/><path d="M1768.800 1069 h5.600 l-2.800 3 z" fill="#dcdcdc"/>
<rect x="1715.800" y="1052.500" width="19.200" height="14.500" rx="1" fill="#dcdcdc"/><circle cx="1725.400" cy="1059.800" r="4.300" fill="#2b2b2b"/>
<circle cx="1762" cy="1059.500" r="7" fill="none" stroke="#dcdcdc" stroke-width="1.500"/><path d="M1757 1064.500 A7 7 0 0 0 1767 1054.500 Z" fill="#dcdcdc"/>
<path d="M1789 1054 Q1789 1052.500 1790.500 1052.500 H1796 L1798 1055 H1805.500 Q1807 1055 1807 1056.500 V1066 Q1807 1067.500 1805.500 1067.500 H1790.500 Q1789 1067.500 1789 1066 Z" fill="#dcdcdc"/><path d="M1789 1055.800 H1807" stroke="#323232" stroke-width="0.800"/>
<path d="M1828.300 1053.300 H1841.700 V1066.700 H1833.500 L1828.300 1061.500 Z" fill="#1f1f1f" stroke="#dcdcdc" stroke-width="1.600"/><path d="M1828.300 1061.500 H1833.500 V1066.700 Z" fill="#dcdcdc"/>
<g fill="none" stroke="#dcdcdc"><path d="M1863 1054.500 H1878.500" stroke-width="1.800"/><path d="M1868 1054 V1052 H1873.500 V1054" stroke-width="1.500"/><path d="M1865 1055.500 L1866 1068 H1875.500 L1876.500 1055.500" stroke-width="1.700"/><path d="M1868.300 1057.500 V1065.500 M1870.800 1057.500 V1065.500 M1873.300 1057.500 V1065.500" stroke-width="1.300"/></g>
<rect x="1918" y="580" width="2" height="500" fill="#262626"/>
<rect x="1498" y="1078.500" width="422" height="1.500" fill="#232323"/>
</svg>
<span class="t" style="left:1573.300px;top:603px;font-size:14.500px;color:#e6e6e6">图层</span>
<span class="t" style="left:1630px;top:603px;font-size:14.500px;color:#9a9a9a">通道</span>
<span class="t" style="left:1689px;top:603px;font-size:14.500px;color:#9a9a9a">路径</span>
<span class="t" style="left:1597.500px;top:654px;font-size:15px;color:#e0e0e0">类型</span>
<span class="t" style="left:1576.700px;top:694.500px;font-size:15px;color:#e0e0e0">叠加</span>
<span class="t" style="left:1747.500px;top:691.200px;font-size:15px;color:#b4b4b4;letter-spacing:0.1px">不透明度:</span>
<span class="t" style="left:1822.500px;top:692.800px;font-size:13px;color:#e6e6e6">29%</span>
<span class="t" style="left:1567.800px;top:733px;font-size:14.500px;color:#b4b4b4">锁定:</span>
<span class="t" style="left:1668.500px;top:787px;font-size:15px;color:#e6e6e6">效果</span>
<span class="t" style="left:1668.500px;top:850.500px;font-size:15px;color:#f0f0f0">图层 <span style="position:static;font-family:'Liberation Serif',serif;font-size:14px">1</span></span>
<span class="t" style="left:1668.500px;top:913.500px;font-size:15px;color:#e6e6e6">背景</span>
<span class="t" style="left:1680.500px;top:1048px;font-size:21px;color:#dcdcdc;font-style:italic;font-family:'Liberation Sans',sans-serif;letter-spacing:-0.5px">fx</span>

</body></html>
